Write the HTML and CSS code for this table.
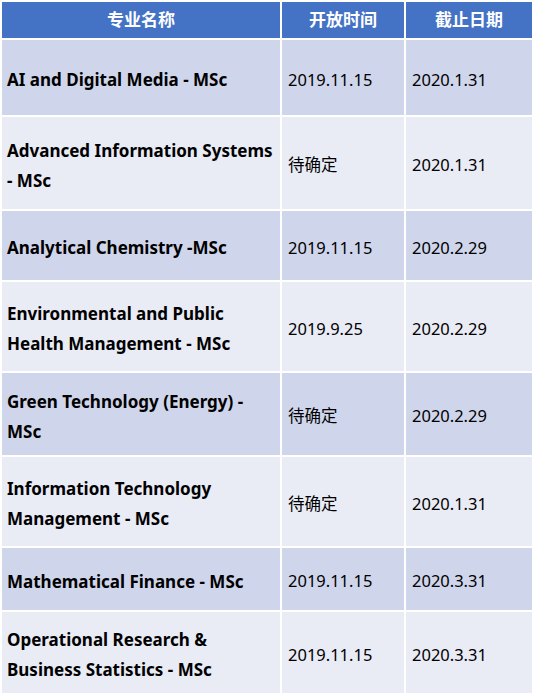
FILE: index.html
```html
<!DOCTYPE html>
<html lang="zh">
<head>
<meta charset="utf-8">
<title>专业列表</title>
<link rel="stylesheet" href="styles.css">
</head>
<body>
<table class="courses">
  <colgroup>
    <col class="c-name">
    <col class="c-open">
    <col class="c-close">
  </colgroup>
  <thead>
    <tr class="head">
      <th>专业名称</th>
      <th>开放时间</th>
      <th>截止日期</th>
    </tr>
  </thead>
  <tbody>
    <tr class="odd h1">
      <td class="name">AI and Digital Media - MSc</td>
      <td>2019.11.15</td>
      <td>2020.1.31</td>
    </tr>
    <tr class="even h2">
      <td class="name">Advanced Information Systems<br>- MSc</td>
      <td>待确定</td>
      <td>2020.1.31</td>
    </tr>
    <tr class="odd h3">
      <td class="name">Analytical Chemistry -MSc</td>
      <td>2019.11.15</td>
      <td>2020.2.29</td>
    </tr>
    <tr class="even h4">
      <td class="name">Environmental and Public<br>Health Management - MSc</td>
      <td>2019.9.25</td>
      <td>2020.2.29</td>
    </tr>
    <tr class="odd h5">
      <td class="name">Green Technology (Energy) -<br>MSc</td>
      <td>待确定</td>
      <td>2020.2.29</td>
    </tr>
    <tr class="even h6">
      <td class="name">Information Technology<br>Management - MSc</td>
      <td>待确定</td>
      <td>2020.1.31</td>
    </tr>
    <tr class="odd h7">
      <td class="name">Mathematical Finance - MSc</td>
      <td>2019.11.15</td>
      <td>2020.3.31</td>
    </tr>
    <tr class="even h8">
      <td class="name">Operational Research &amp;<br>Business Statistics - MSc</td>
      <td>2019.11.15</td>
      <td>2020.3.31</td>
    </tr>
  </tbody>
</table>
</body>
</html>
```
FILE: styles.css
```css
html, body {
  margin: 0;
  padding: 0;
  background: #ffffff;
}

body {
  font-family: "Noto Sans", "Noto Sans CJK SC", sans-serif;
  color: #000000;
}

.courses {
  border-collapse: separate;
  border-spacing: 2px;
  table-layout: fixed;
  width: 534px;
}

.c-name { width: 278px; }
.c-open { width: 122px; }
.c-close { width: 126px; }

.courses th,
.courses td {
  padding: 4px 0 0 6px;
  box-sizing: border-box;
  vertical-align: middle;
  text-align: left;
  font-size: 16.5px;
  line-height: 30px;
}

.courses td.name {
  padding: 5px 0 0 5px;
  font-size: 17px;
  font-weight: 700;
}

.head th {
  height: 36px;
  padding: 0;
  background: #4472c4;
  color: #ffffff;
  font-weight: 700;
  font-size: 17px;
  text-align: center;
  line-height: 36px;
}

.odd td { background: #cfd5ea; }
.even td { background: #e9ebf5; }

.h1 td { height: 75px; }
.h2 td { height: 92px; }
.h3 td { height: 69px; }
.h4 td { height: 89px; }
.h5 td { height: 82px; }
.h6 td { height: 89px; }
.h7 td { height: 62px; }
.h8 td { height: 81px; }
```
